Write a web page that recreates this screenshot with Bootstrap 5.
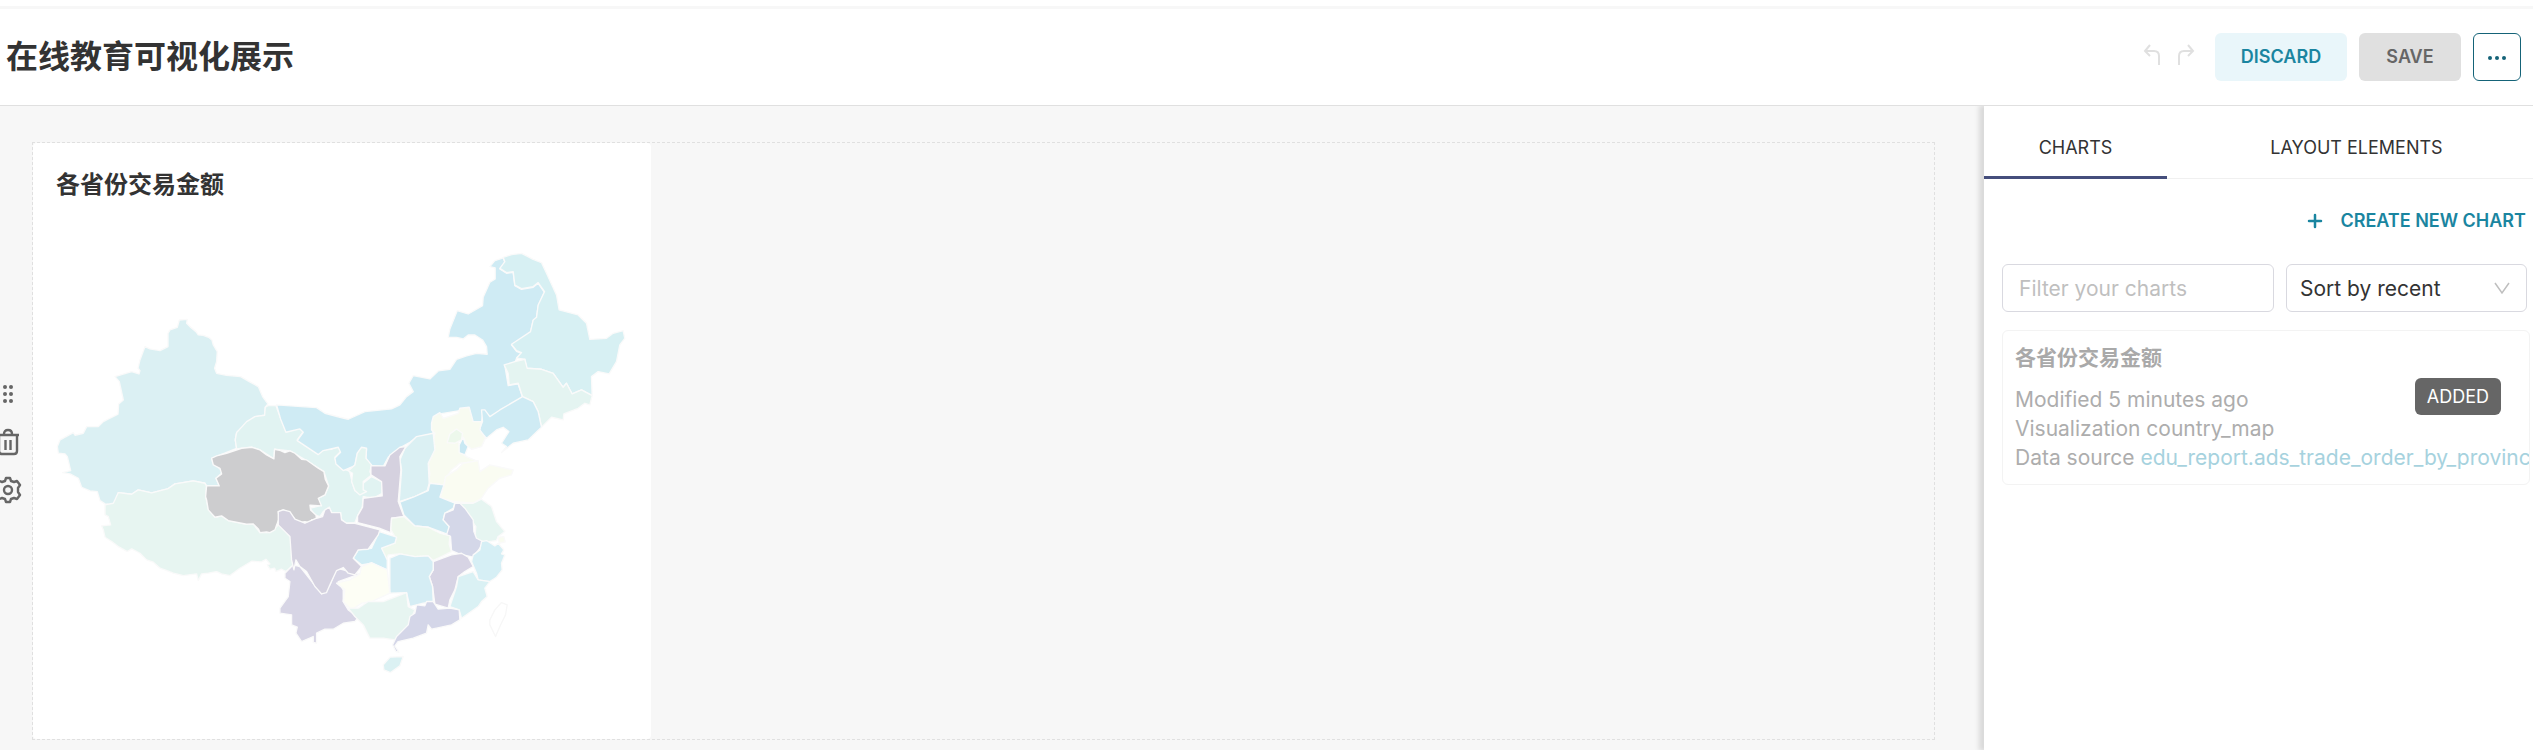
<!DOCTYPE html>
<html lang="zh-CN">
<head>
<meta charset="utf-8">
<meta name="viewport" content="width=device-width, initial-scale=1">
<title>在线教育可视化展示</title>
<link rel="stylesheet" href="https://cdn.jsdelivr.net/npm/bootstrap@5.3.0/dist/css/bootstrap.min.css">
<style>
body{font-family:Inter,"Noto Sans CJK SC",sans-serif;font-size:21px;line-height:30px;color:#333;background:#fff}
.dash-header{border-top:3px solid #f7f7f7;border-bottom:1px solid #e0e0e0;margin-top:6px;padding:24px 12px 24px 6px;background:#fff;z-index:2}
.dash-title{font-size:32px;line-height:48px;font-weight:700}
.btn{--bs-btn-border-radius:6px;font-size:18px;line-height:24px;font-weight:600;height:48px}
.header-actions{gap:12px}
.btn-discard,.btn-discard:hover{background:#e9f6fa;color:#1a85a0;width:132px}
.btn-save,.btn-save:disabled{background:#e0e0e0;color:#666;border:0;opacity:1;width:102px}
.btn-more{border:1px solid #156378;color:#156378;width:48px}
.history{margin-right:12px}
.btn-history{width:34px;height:32px;border:0;background:none;color:#e0e0e0;line-height:0}
.btn-history svg{display:block;margin:0 auto 4px}
.builder{background:#f7f7f7;padding:36px 0 8px}
.rail{width:16px;gap:20px;margin-right:16px}
.rail button{border:0;background:none;color:#666;width:28px;height:28px;line-height:0;flex:none}
.canvas-grid{border:1px dashed #e0e0e0;margin-right:49px}
.chart-holder{width:32.5%;background:#fff;border-radius:4px}
.chart-title{font-size:24px;line-height:36px;padding:24px 23px 7px}
.side{width:549px;box-shadow:-4px 0 5px 1px #0000001f;z-index:1}
.side-tabs{border-bottom:1px solid #f0f0f0}
.side-tabs button{border:0;background:none;font-size:18px;line-height:24px;padding:30px 0 16px;color:#333;border-bottom:3px solid transparent;margin-bottom:-1px}
.side-tabs .tab-charts{width:183px;border-bottom-color:#454e7c}
.side-tabs .tab-layout{padding-left:13px}
.create-row{padding:18px 7px 0 0}
.btn-create{color:#1a85a0;padding:12px 0;border:0}
.filters{padding:19px 6px 18px 18px;gap:12px}
.form-control,.form-select{height:48px;font-size:21px;border:1px solid #d9d9e0;border-radius:6px;padding:8px 16px;color:#333}
.form-control::placeholder{color:#bfbfbf}
.sort-box{width:241px;flex:none}
.form-select{background-image:url("data:image/svg+xml,%3Csvg xmlns='http://www.w3.org/2000/svg' viewBox='0 0 16 16'%3E%3Cpath d='M1 3l7 10 7-10' fill='none' stroke='%23bfbfbf' stroke-width='1.5'/%3E%3C/svg%3E");background-position:right 16px center;background-size:16px 16px;padding-left:13px}
.slice{margin:0 3px 0 18px;border:1px solid #f3f3f3;border-radius:6px;padding:12px 0 12px 12px;color:#adadad;overflow:hidden}
.slice h2{font-size:21px;line-height:30px;margin-bottom:12px;font-weight:700;color:#a9a9a9}
.slice p{margin:0;line-height:29px;white-space:nowrap}
.slice a{color:#a6d2de;text-decoration:none}
.added{position:absolute;right:28px;top:47px;background:#666;color:#fff;border-radius:6px;font-size:18px;line-height:25px;padding:6px 12px}
.map path{stroke:#fafafa;stroke-width:4;stroke-linejoin:round}
</style>
</head>
<body class="min-vh-100 d-flex flex-column">
<header class="dash-header d-flex align-items-center position-relative">
  <h1 class="dash-title mb-0 me-auto">在线教育可视化展示</h1>
  <div class="history d-flex">
    <button class="btn-history p-0" aria-label="Undo" disabled><svg width="18" height="24" viewBox="0 0 18 24" fill="none" stroke="currentColor" stroke-width="2"><path d="M7 2L2 8l5 5M2 8h9q5 0 5 5v9"/></svg></button>
    <button class="btn-history p-0" aria-label="Redo" disabled><svg width="18" height="24" viewBox="0 0 18 24" fill="none" stroke="currentColor" stroke-width="2"><path d="M11 2l5 6-5 5M16 8H7q-5 0-5 5v9"/></svg></button>
  </div>
  <div class="d-flex header-actions">
    <button class="btn btn-discard">DISCARD</button>
    <button class="btn btn-save" disabled>SAVE</button>
    <button class="btn btn-more p-0" aria-label="More"><svg width="20" height="6" viewBox="0 0 20 6" fill="currentColor"><circle cx="3" cy="3" r="2"/><circle cx="10" cy="3" r="2"/><circle cx="17" cy="3" r="2"/></svg></button>
  </div>
</header>
<div class="d-flex flex-grow-1">
  <main class="builder flex-grow-1 d-flex align-items-start overflow-hidden">
    <div class="rail d-flex flex-column align-items-center align-self-center flex-shrink-0">
      <button class="p-0" aria-label="Move"><svg width="28" height="28" viewBox="0 0 28 28" fill="currentColor"><circle cx="11" cy="7" r="2"/><circle cx="17" cy="7" r="2"/><circle cx="11" cy="14" r="2"/><circle cx="17" cy="14" r="2"/><circle cx="11" cy="21" r="2"/><circle cx="17" cy="21" r="2"/></svg></button>
      <button class="p-0" aria-label="Delete"><svg width="28" height="28" viewBox="0 0 28 28" fill="none" stroke="currentColor" stroke-width="2.400"><path d="M3 7h22M10 6q0-4 4-4t4 4M5 8v15q0 3 3 3h12q3 0 3-3V8M11.500 12v10M16.500 12v10"/></svg></button>
      <button class="p-0" aria-label="Settings"><svg width="28" height="28" viewBox="0 0 28 28" fill="none" stroke="currentColor" stroke-width="2.400" stroke-linejoin="round"><circle cx="14" cy="14" r="4"/><path d="M12 2h4l1 3 3 1 3-1 3 4-2 3v4l2 3-3 4-3-1-3 1-1 3h-4l-1-3-3-1-3 1-3-4 2-3v-4l-2-3 3-4 3 1 3-1Z"/></svg></button>
    </div>
    <div class="canvas-grid flex-grow-1">
      <section class="chart-holder">
        <h2 class="chart-title mb-0 fw-bold">各省份交易金额</h2>
        <svg class="map d-block w-100" viewBox="-21 -60 1854 1587" role="img" aria-label="各省份交易金额">
          <path fill="#dbf0f3" d="M418 270L442 268 440 280 450 290 468 305 475 315 490 316 508 323 516 330 520 345 532 365 530 395 524 415 530 430 560 436 602 440 628 455 655 470 668 500 684 522 676 532 674 556 645 560 620 580 590 608 586 630 590 655 515 685 520 702 545 720 545 730 528 745 538 768 500 768 495 760 460 753 405 762 385 776 335 789 295 780 275 793 235 788 228 815 220 825 195 822 180 812 172 785 150 783 125 772 115 745 90 732 68 728 92 722 82 680 75 672 55 670 52 650 60 630 100 608 105 616 130 610 140 590 175 590 190 575 210 565 234 553 236 522 250 510 238 455 225 440 275 425 297 432 300 422 294 415 300 390 315 350 330 357 360 362 384 350 384 310 390 300 412 292Z"/>
          <g transform="translate(0 510)">
            <path fill="#e7f5f1" d="M220 310L235 278 275 283 295 270 335 279 385 266 405 252 460 243 495 250 500 260 497 290 505 325 525 352 545 348 565 362 620 373 640 372 660 398 690 398 715 375 735 385 752 410 758 470 760 495 738 515 725 508 708 515 704 505 690 508 682 495 690 492 678 478 665 486 635 484 600 505 570 527 545 522 530 515 505 520 485 522 475 542 470 522 430 527 400 520 375 510 360 505 340 487 320 480 300 460 275 447 262 455 235 440 215 425 195 412 190 390 185 378 212 375 205 350 195 345 195 315Z"/>
            <path fill="#e1f3f2" d="M684 17L708 17 722 55 738 95 780 85 790 95 772 120 800 140 835 162 850 150 875 148 895 140 902 155 885 172 888 190 910 210 928 210 938 250 945 272 960 282 970 250 995 230 1025 245 1027 280 1000 295 970 290 967 322 953 348 945 368 920 370 905 360 902 338 875 338 868 322 850 335 840 350 825 345 810 325 838 318 835 295 855 285 866 258 852 215 800 182 750 153 704 148 702 177 660 150 635 142 590 147 586 120 590 98 620 65 645 50 674 46 676 22Z"/>
            <path fill="#cdcdcf" d="M515 175L530 168 560 160 605 145 635 142 660 150 680 165 702 177 704 148 722 152 735 158 750 153 765 160 785 178 800 180 835 205 852 215 856 238 866 258 855 285 835 295 845 318 810 316 812 330 828 345 830 358 815 360 812 370 795 365 780 368 765 358 750 340 730 330 715 335 718 355 710 375 705 390 690 398 680 396 660 398 656 388 640 372 620 373 565 362 545 348 525 352 505 330 500 300 497 290 500 258 538 258 528 235 545 222 540 205 520 195Z"/>
          </g>
          <g transform="translate(900 0)">
            <path fill="#cfebf4" d="M-190 525l75 5 45 3 25 17 45 12 25 6 50-23 80-8 25-12 20-25 20-15-13-25 13-23 50 10 25-24 35-5 20-30 30-10 30-8 32 3-2-23-12-20-23-15h-20l-15 12-20-5-25 0 5-25 22-55 33 10 43-25 2-25 20-45 16-10v-33l-16-4 15-18 25-8 5 13-15 20 20 13 20-3 5 40 20 11 35-6 15-12 19 27-19 40-5 37-10 8-8 35-57 38 15 19 15 6-13 12-7 15-30 10 10 60 30-5 13 40-98 60-20-18-5 33h-30l-7-40-28 5-60 10-25 30 5 30-50 10-20 15-30 17-35 28-15 28-35-3-17-20 2-30-15-3-13 18-7 35-35 15-22-20-3-18 17-17-7-15-45 10-15 12-63-42 18-25-10-10-42 10-16-40Z"/>
            <path fill="#d7f0f3" d="M490 82l25-8 30-4 35 18 25 10 15 32 30 65 8 45 57 15 25 25 10 48 50-3 20-15 30-8 5 23-15 20-10 50-22 37-33-7-20 15 2 57-32-17-28 12-17-32-10 12-30-42-35-12-45-3-5-27-25-3 15-17-15-6-15-19 57-38 8-35 10-8 5-37 19-40-19-27-15 12-35 6-20-11-5-40-20 3-20-13 15-20Z"/>
            <path fill="#e4f4f1" d="M525 395l30-7 7 27 43 3 35 12 30 42 10-12 17 32 28-12 32 17-7 28-15-5-20 15-43 17-2 18-35-8-30 30-10-47-15-30-32-15-13-40-27 5-3-35-12-25Z"/>
            <path fill="#cfebf4" d="M548 500l32 15 15 30 10 47-40 38-45 10-35 28 15-18-15-10 22-35-17-13-20 8-30 25-22-25 10-25-3-35h10l15 20 30-20Z"/>
            <path fill="#f8fbf1" stroke="none" d="M275 580L280 560 300 548 310 565 355 550 360 535 388 532 400 575 425 575 420 600 437 625 425 650 395 658 380 645 372 625 355 635 365 670 380 680 415 695 360 700 335 720 315 750 313 765 265 760 270 730 265 700 275 680 285 650 280 630 285 610 275 600Z"/>
            <path fill="#edf8ec" stroke="none" d="M322 638l8-26 20-15 18 13-3 20-20 10Z"/><path fill="#c9e8f3" stroke="none" d="M358 645L370 622 375 640 385 650 375 675 358 668Z"/>
          </g>
          <g transform="translate(780 570)">
            <path fill="#fafcf2" stroke="none" d="M433 195l4-25 33-20 20-20 45-8 5 33 30-20 70 15-5 15-35 10-35 30-20 30-25 15-55-5-45-10Z"/>
            <path fill="#e4f5f1" d="M148 150l17-15 7-35 13-18 15 3-2 30 17 20-5 20 5 10-25 20v25l10 5-20 10-15-13-10-27 3-25-18-10Z"/>
            <path fill="#dbf0f3" d="M315 85l35-35 50-10 5 50-20 40 3 60-6 22-42 20-42 13 7-95-5-30Z"/>
            <path fill="#d5d1df" d="M318 80l-18 30 3 40-8 95 17 45-37 5-3 43-34-13-65-17v-20l15-26 2-27 57-7-2-43-32-20v-27h42l15-33 30-23Z"/>
            <path fill="#cde9f2" d="M300 247l40-15 45-20 5-22 42 5-12 37 45 18-5 15-25 15-5 20 18 20v25l-63-23-40-4-33-33Z"/>
            <path fill="#e6f5f1" d="M465 250L520 250 545 238 575 260 590 305 615 335 595 350 590 362 545 368 525 355 528 320 500 280Z"/>
            <path fill="#f9fcf1" stroke="none" d="M595 352L612 350 616 366 598 370Z"/>
            <path fill="#d4d7e8" d="M465 250l15 0 15 15 25 35 2 35 8 20 20 10-10 20-20 27-40-9-25-11-3-42-12-5 8-25-18-20 5-20 25-10Z"/>
            <path fill="#d6eff5" d="M545 365L560 362 585 378 595 370 612 390 605 402 615 405 605 430 607 450 590 472 570 485 535 480 530 460 515 425 520 405 540 390Z"/>
            <path fill="#d7d4e4" d="M400 425L455 405 485 400 505 412 520 440 495 455 475 470 465 510 450 540 445 565 405 553 398 500 388 470 400 450Z"/>
            <path fill="#daf1f4" d="M520 455l15 25 35 5-15 20 7 25-17 15-10 15-50 35-7-25-28-10 20-60 5-30Z"/>
            <path fill="#eff8ee" d="M275 295l37-5 33 28 40 4 35 18 30 8-2 25 7 22-55 27-15-14-40 2-45-8-35 3-5 15-17-35 42-15 3-15-15-25Z"/>
            <path fill="#d5edf4" d="M270 415l30-13 45 8 40-2 15 17v25l-12 20 10 30 2 45-30 5-40 10-10-42-50 2v-70Z"/>
            <path fill="#d1edf5" d="M238 335l52 17-5 18-40 15 17 35v30l-47-20-30 5-25-20 15-25 40-5Z"/>
            <path fill="#d7d5e5" d="M-20 435L0 440 65 522 90 495 110 445 150 455 180 462 115 485 130 510 130 545 145 570 175 592 165 605 130 610 100 628 75 628 50 640 50 670 40 668 40 650 5 665 -12 640 -8 622 -25 615 -25 585 -60 580 -60 565 -35 530 -30 485 -45 475 -45 460Z"/>
            <path fill="#d5d2e0" d="M125 300L140 310 165 310 240 330 235 345 205 388 175 390 160 415 185 440 165 465 145 460 130 443 110 452 90 495 80 518 65 522 45 500 20 455 0 440 -12 420 -18 450 -25 420 -30 350 -65 315 -65 275 -50 270 -30 275 -15 298 15 310 50 295 68 290 75 270 88 262 95 278 122 278Z"/>
            <path fill="#fdfef5" d="M110 490L150 480 180 462 185 440 215 428 240 440 262 450 270 520 215 545 185 550 155 570 130 545 135 510Z"/>
            <path fill="#e7f5f1" d="M145 565l30 0 30-20 45 0 70-27 5 42 20 10-20 50-40 40-35-5-40 0-20-40-25-25Z"/>
            <path fill="#d4d6e8" d="M350 555L375 558 380 545 400 545 415 568 450 565 478 570 480 600 455 615 410 625 395 628 385 615 380 640 340 655 295 665 285 678 297 697 288 695 278 675 290 650 325 615 330 590 345 580Z"/>
            <path fill="#dbf1f3" d="M250 735L270 712 310 710 300 738 272 758 252 750Z"/>
            <path fill="#fff" style="stroke:#f7f7f7" d="M570 600l15-30 20-22 17 7-5 30-17 35-13 30-17-35Z"/>
          </g>
        </svg>
      </section>
    </div>
  </main>
  <aside class="side bg-white flex-shrink-0">
    <div class="side-tabs d-flex" role="tablist">
      <button class="tab-charts" role="tab" aria-selected="true">CHARTS</button>
      <button class="tab-layout flex-grow-1" role="tab" aria-selected="false">LAYOUT ELEMENTS</button>
    </div>
    <div class="create-row d-flex justify-content-end">
      <button class="btn btn-create d-flex align-items-center gap-3"><svg width="18" height="18" viewBox="0 0 18 18" fill="none" stroke="currentColor" stroke-width="2.500" stroke-linecap="round"><path d="M9 3v12M3 9h12"/></svg>CREATE NEW CHART</button>
    </div>
    <div class="filters d-flex">
      <input class="form-control" type="text" placeholder="Filter your charts" aria-label="Filter your charts">
      <div class="sort-box"><select class="form-select" aria-label="Sort"><option>Sort by recent</option></select></div>
    </div>
    <article class="slice position-relative">
      <h2>各省份交易金额</h2>
      <p>Modified 5 minutes ago</p>
      <p>Visualization country_map</p>
      <p>Data source <a href="#">edu_report.ads_trade_order_by_province</a></p>
      <span class="added">ADDED</span>
    </article>
  </aside>
</div>
<script src="https://cdn.jsdelivr.net/npm/bootstrap@5.3.0/dist/js/bootstrap.bundle.min.js"></script>
</body>
</html>
